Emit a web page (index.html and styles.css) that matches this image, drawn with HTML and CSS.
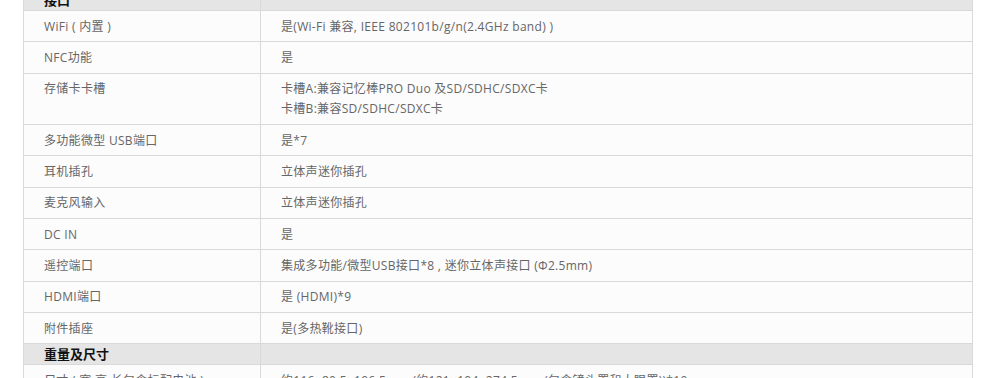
FILE: index.html
```html
<!DOCTYPE html>
<html lang="zh-CN">
<head>
<meta charset="utf-8">
<link rel="stylesheet" href="styles.css">
</head>
<body>
<table class="spec">
  <colgroup><col class="c1"><col class="c2"></colgroup>
  <tr class="sec"><th>接口</th><th></th></tr>
  <tr><td>WiFi ( 内置 )</td><td>是(Wi-Fi 兼容, IEEE 802101b/g/n(2.4GHz band) )</td></tr>
  <tr><td>NFC功能</td><td>是</td></tr>
  <tr><td>存储卡卡槽</td><td>卡槽A:兼容记忆棒PRO Duo 及SD/SDHC/SDXC卡<br>卡槽B:兼容SD/SDHC/SDXC卡</td></tr>
  <tr><td>多功能微型 USB端口</td><td>是*7</td></tr>
  <tr><td>耳机插孔</td><td>立体声迷你插孔</td></tr>
  <tr><td>麦克风输入</td><td>立体声迷你插孔</td></tr>
  <tr><td>DC IN</td><td>是</td></tr>
  <tr><td>遥控端口</td><td>集成多功能/微型USB接口*8 , 迷你立体声接口 (Φ2.5mm)</td></tr>
  <tr><td>HDMI端口</td><td>是 (HDMI)*9</td></tr>
  <tr><td>附件插座</td><td>是(多热靴接口)</td></tr>
  <tr class="sec"><th>重量及尺寸</th><th></th></tr>
  <tr><td>尺寸 ( 宽 高 长包含标配电池 )</td><td>约116×80.5×196.5mm (约121×104×274.5mm (包含镜头罩和大眼罩))*10</td></tr>
</table>
</body>
</html>
```
FILE: styles.css
```css
html, body {
  margin: 0;
  padding: 0;
  background: #ffffff;
}
body {
  font-family: "Open Sans", "Noto Sans CJK SC", "Noto Sans", sans-serif;
  font-size: 12px;
  letter-spacing: 0.3px;
  color: #666666;
}
.spec {
  margin: -11px 0 0 23px;
  width: 950px;
  border-collapse: collapse;
  table-layout: fixed;
}
.spec .c1 { width: 237px; }
.spec td, .spec th {
  border: 1px solid #d9d9d9;
  padding: 5.7px 20px 4.64px;
  line-height: 20px;
  text-align: left;
  vertical-align: top;
  background: #fcfcfc;
  white-space: nowrap;
}
.spec tr.sec th {
  background: #e5e5e5;
  padding: 0 20px;
  height: 21px;
  box-sizing: border-box;
  font-family: "Noto Sans CJK SC", sans-serif;
  font-size: 13px;
  font-weight: bold;
  letter-spacing: 0;
  color: #111111;
  line-height: 20px;
}
```
